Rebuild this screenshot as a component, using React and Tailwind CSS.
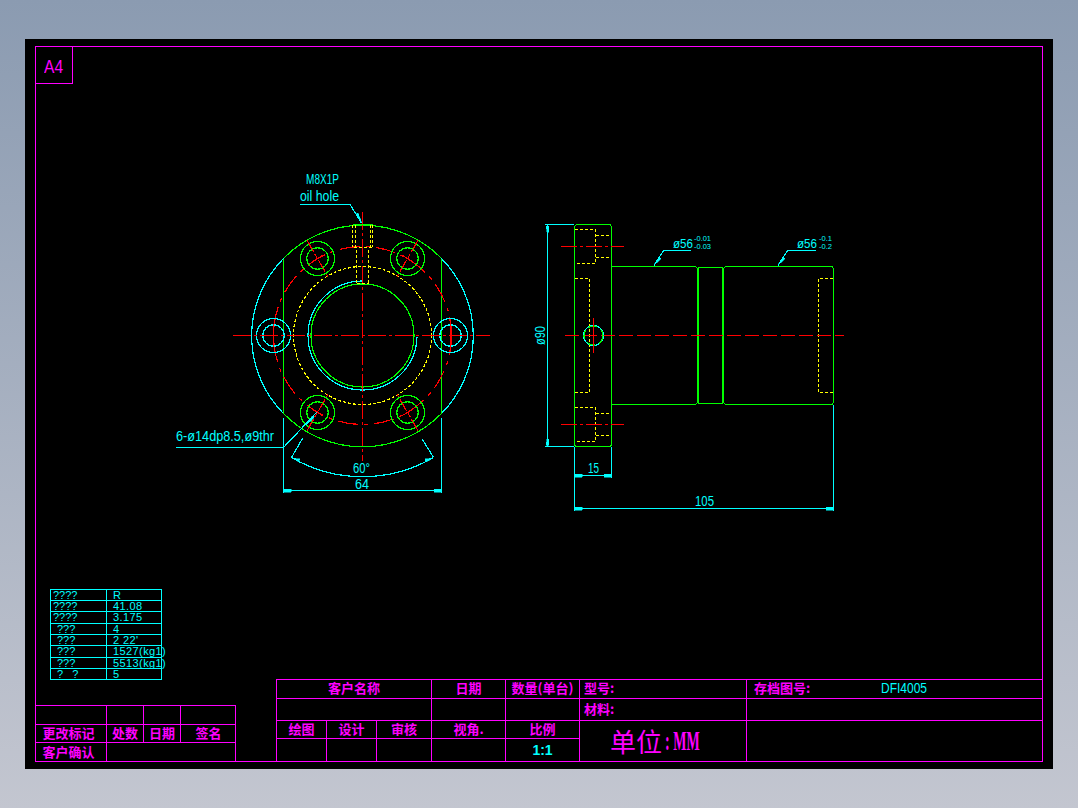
const GREEN = "#00ff00", CYAN = "#00ffff", RED = "#ff0000", YEL = "#ffff00";

function L({ d, c, dash }) {
  return <path d={d} fill="none" stroke={c} strokeWidth="1.2" strokeDasharray={dash} />;
}
function C({ x, y, r, c, dash }) {
  return <circle cx={x} cy={y} r={r} fill="none" stroke={c} strokeWidth="1.2" strokeDasharray={dash} />;
}
function T({ x, y, w, s = 13, rot, children }) {
  return (
    <text x={x} y={y} fill={CYAN} fontSize={s} textLength={w} lengthAdjust="spacingAndGlyphs"
      transform={rot ? `rotate(${rot} ${x} ${y})` : undefined}>
      {children}
    </text>
  );
}
function Arrow({ p }) {
  return <polygon points={p} fill={CYAN} stroke={CYAN} strokeWidth="0.5" />;
}

const cx = 362.5, cy = 335.5;
const centerDash = "18 3 3 3";
const holes = [
  [317.5, 258.5, 120],
  [407.5, 258.5, 60],
  [317.5, 412.5, 240],
  [407.5, 412.5, 300],
];

function Hole({ x, y, a }) {
  const t = (a * Math.PI) / 180;
  const ux = Math.cos(t), uy = -Math.sin(t);
  const px = -uy, py = ux;
  return (
    <g>
      <C x={x} y={y} r={17} c={GREEN} />
      <C x={x} y={y} r={10.7} c={GREEN} />
      <L c={RED} dash="13 3 4 3" d={`M${x + ux * 21} ${y + uy * 21}L${x - ux * 21} ${y - uy * 21}`} />
      <L c={RED} d={`M${x + px * 6} ${y + py * 6}L${x - px * 6} ${y - py * 6}`} />
    </g>
  );
}

function Drawing() {
  return (
    <svg width="1006" height="505" viewBox="36 84 1006 505" shapeRendering="crispEdges"
      className="block font-['Liberation_Sans',sans-serif]">
      {/* front view */}
      <L c={GREEN} d="M283.5 258.5A110.3 110.3 0 0 1 441.5 258.5" />
      <L c={CYAN} d="M441.5 258.5A110.3 110.3 0 0 1 441.5 413.5" />
      <L c={GREEN} d="M441.5 413.5A110.3 110.3 0 0 1 283.5 413.5" />
      <L c={CYAN} d="M283.5 413.5A110.3 110.3 0 0 1 283.5 258.5" />
      <L c={GREEN} d="M283.5 258.5V413.5M441.5 258.5V413.5" />
      <C x={cx} y={cy} r={89} c={RED} dash="20 6 4 6" />
      <C x={cx} y={cy} r={69} c={YEL} dash="3 2" />
      <L c={CYAN} d="M362.5 281A54.5 54.5 0 1 0 417 337" />
      <C x={cx} y={cy} r={51.5} c={GREEN} />
      {holes.map(([x, y, a]) => <Hole key={a} x={x} y={y} a={a} />)}
      {[273.5, 450.5].map((x) => (
        <g key={x}>
          <C x={x} y={cy} r={17} c={CYAN} />
          <C x={x} y={cy} r={10.7} c={CYAN} />
          <L c={RED} d={`M${x} 324V347`} />
        </g>
      ))}
      <L c={RED} dash={centerDash} d="M233 335.5H490" />
      <L c={RED} dash={centerDash} d="M362.5 212V461" />
      {/* oil hole */}
      <L c={GREEN} d="M352.5 224.5H372.5" />
      <L c={YEL} dash="3 2" d="M352.5 224.5V247M355.5 224.5V247M370.5 224.5V247M372.5 224.5V247M353.5 247.5H372M356.5 249.5V284M368.5 249.5V284M356.5 283.5H369" />
      <L c={CYAN} d="M300 204.5H350L361.5 223" />
      <Arrow p="356,214 358,213 362,223" />
      <T x={306} y={184} w={33} s={14}>M8X1P</T>
      <T x={300} y={201} w={39} s={14}>oil hole</T>
      {/* thread note */}
      <L c={CYAN} d="M176 447.5H283.5L317 412" />
      <Arrow p="312,416 314,418 306,425" />
      <T x={176} y={441} w={98} s={15}>6-ø14dp8.5,ø9thr</T>
      {/* 60 / 64 */}
      <L c={CYAN} d="M291.5 457.5A141 141 0 0 0 433.5 457.5" />
      <L c={CYAN} d="M302.5 438.5L291.5 457.5M422.5 439.5L433.5 457.5" />
      <Arrow p="292,458 300,459 299,462" />
      <Arrow p="433,458 425,459 426,462" />
      <T x={353} y={473} w={17} s={14}>60°</T>
      <L c={CYAN} d="M283.5 418V492.5M441.5 418V492.5M283.5 490.5H441.5" />
      <Arrow p="284,489 291,489 291,492 284,492" />
      <Arrow p="441,489 434,489 434,492 441,492" />
      <T x={355} y={489} w={14} s={14}>64</T>

      {/* side view */}
      <L c={GREEN} d="M576.5 224.5H610L611.5 226.5V445L610 446.5H576.5L574.5 445V226.5Z" />
      <L c={GREEN} d="M611.5 266.5H695.5L697.5 268.5V402.5L695.5 404.5H611.5" />
      <L c={GREEN} d="M698.5 267.5H722.5V403.5H698.5Z" />
      <L c={GREEN} d="M725.5 266.5H832L833.5 268.5V402.5L832 404.5H725.5L723.5 402.5V268.5Z" />
      <L c={YEL} dash="3 2" d="M575 229.5H595.5V263.5H575M596 235.5H611M596 257.5H611" />
      <L c={YEL} dash="3 2" d="M575 407.5H595.5V441.5H575M596 413.5H611M596 435.5H611" />
      <L c={YEL} dash="3 2" d="M575 278.5H589.5V392.5H575" />
      <L c={YEL} dash="3 2" d="M833 278.5H818.5V392.5H833" />
      <L c={RED} dash="16 3 3 3" d="M561 246.5H623.5M561 424.5H623.5" />
      <L c={RED} dash="14 4" d="M565 335.5H844" />
      <C x={593.5} y={335.5} r={10} c={CYAN} />
      <C x={593.5} y={335.5} r={9.5} c={GREEN} dash="9 4" />
      <L c={RED} d="M593.5 318V353" />
      {/* dims */}
      <L c={CYAN} d="M545 224.5H574M545 446.5H574M547.5 225V446" />
      <Arrow p="546,226 549,226 548.5,232 547,232" />
      <Arrow p="546,445 549,445 548.5,439 547,439" />
      <T x={545} y={345} w={19} s={14} rot={-90}>ø90</T>
      <L c={CYAN} d="M574.5 447V510.5M611.5 447V478M575 475.5H611" />
      <Arrow p="575,474 582,474 582,477 575,477" />
      <Arrow p="611,474 604,474 604,477 611,477" />
      <T x={588} y={473} w={11} s={15}>15</T>
      <L c={CYAN} d="M833.5 405V510.5M575 508.5H833" />
      <Arrow p="575,507 582,507 582,510 575,510" />
      <Arrow p="833,507 826,507 826,510 833,510" />
      <T x={695} y={506} w={19} s={15}>105</T>
      <L c={CYAN} d="M691 250.5H663.5L654 265.5" />
      <Arrow p="654,265 659,257 661,259" />
      <T x={673} y={248} w={20} s={13}>ø56</T>
      <T x={694} y={241} w={17} s={7}>-0.01</T>
      <T x={694} y={249} w={17} s={7}>-0.03</T>
      <L c={CYAN} d="M816 250.5H787.5L778 265.5" />
      <Arrow p="778,265 783,257 785,259" />
      <T x={797} y={248} w={20} s={13}>ø56</T>
      <T x={819} y={241} w={13} s={7}>-0.1</T>
      <T x={819} y={249} w={13} s={7}>-0.2</T>
    </svg>
  );
}

const params = [
  ["????", "R", "h-[11px]", "pl-[2px]"],
  ["????", "41.08", "h-[11px]", "pl-[2px]"],
  ["????", "3.175", "h-[12px]", "pl-[2px]"],
  ["???", "4", "h-[11px]", "pl-[6px]"],
  ["???", "2 22'", "h-[11px]", "pl-[6px]"],
  ["???", "1527(kg1)", "h-[12px]", "pl-[6px]"],
  ["???", "5513(kg1)", "h-[11px]", "pl-[6px]"],
  ["?   ?", "5", "h-[11px]", "pl-[6px]"],
];

function ParamTable() {
  return (
    <div className="ml-[14px] w-[112px] border border-b-0 border-[#00ffff] font-['Liberation_Sans',sans-serif] text-[11px] leading-none text-[#00ffff]">
      {params.map(([a, b, h, p], i) => (
        <div key={i} className={`flex border-b border-[#00ffff] ${h}`}>
          <div className={`w-[56px] shrink-0 border-r border-[#00ffff] whitespace-pre ${p}`}>{a}</div>
          <div className="pl-[6px] whitespace-nowrap tracking-[0.4px]">{b}</div>
        </div>
      ))}
    </div>
  );
}

const cell = "flex items-center justify-center border-[#ff00ff] font-bold text-[13px] leading-none";
const label = `${cell} pb-[3px]`;

function ChangeTable() {
  return (
    <div className="mt-[25px] grid w-[200px] grid-cols-[71px_37px_37px_55px] grid-rows-[19px_18px_19px] border-t border-r border-[#ff00ff] text-[#ff00ff]">
      <div className={`${cell} border-r border-b`} />
      <div className={`${cell} border-r border-b`} />
      <div className={`${cell} border-r border-b`} />
      <div className={`${cell} border-b`} />
      <div className={`${label} border-r border-b pr-[5px]`}>更改标记</div>
      <div className={`${label} border-r border-b`}>处数</div>
      <div className={`${label} border-r border-b`}>日期</div>
      <div className={`${label} border-b`}>签名</div>
      <div className={`${label} border-r pr-[5px]`}>客户确认</div>
      <div className={`${cell} col-span-3`} />
    </div>
  );
}

function TitleBlock() {
  return (
    <div className="grid w-[766px] grid-cols-[50px_50px_55px_74px_74px_167px_295px] grid-rows-[19px_22px_18px_22px] border-t border-l border-[#ff00ff] text-[#ff00ff]">
      <div className={`${label} col-span-3 border-r border-b`}>客户名称</div>
      <div className={`${label} border-r border-b`}>日期</div>
      <div className={`${label} border-r border-b`}>数量(单台)</div>
      <div className={`${label} border-r border-b !justify-start pl-[4px]`}>型号:</div>
      <div className={`${label} border-b !justify-start pl-[7px]`}>
        存档图号:
        <span className="ml-[71px] inline-block origin-left scale-x-[0.8] font-normal font-['Liberation_Sans',sans-serif] text-[#00ffff] text-[15px]">DFI4005</span>
      </div>

      <div className={`${cell} col-span-3 border-r border-b`} />
      <div className={`${cell} border-r border-b`} />
      <div className={`${cell} border-r border-b`} />
      <div className={`${label} border-r border-b !justify-start pl-[4px]`}>材料:</div>
      <div className={`${cell} border-b`} />

      <div className={`${label} border-r border-b`}>绘图</div>
      <div className={`${label} border-r border-b`}>设计</div>
      <div className={`${label} border-r border-b`}>审核</div>
      <div className={`${label} border-r border-b`}>视角.</div>
      <div className={`${label} border-r border-b`}>比例</div>
      <div className={`${cell} row-span-2 border-r !justify-start pl-[30px] !font-normal`}>
        <span className="text-[26px]">单位</span>
        <span className="ml-[3px] inline-block origin-left scale-x-[0.5] whitespace-pre font-['Liberation_Serif',serif] text-[28px] font-bold">: MM</span>
      </div>
      <div className={`${cell} row-span-2`} />

      <div className={`${cell} border-r`} />
      <div className={`${cell} border-r`} />
      <div className={`${cell} border-r`} />
      <div className={`${cell} border-r`} />
      <div className={`${cell} border-r text-[#00ffff] font-['Liberation_Sans',sans-serif] text-[14px]`}>1:1</div>
    </div>
  );
}

export default function App() {
  return (
    <div className="h-[808px] w-[1078px] overflow-hidden bg-gradient-to-b from-[#8b9bb1] to-[#c3c6d0] pt-[39px] pl-[25px] font-['Noto_Sans_CJK_SC',sans-serif]">
      <div className="h-[730px] w-[1028px] bg-black pt-[7px] pl-[10px]">
        <div className="h-[716px] w-[1008px] border border-[#ff00ff]">
          <div className="flex h-[37px] w-[37px] items-center justify-center border-r border-b border-[#ff00ff] pt-[2px] font-['Liberation_Sans',sans-serif] text-[#ff00ff]">
            <span className="inline-block scale-x-[0.82] text-[19px] leading-none">A4</span>
          </div>
          <Drawing />
          <div className="flex h-[172px] items-end justify-between">
            <div className="flex h-full w-[240px] flex-col">
              <ParamTable />
              <ChangeTable />
            </div>
            <TitleBlock />
          </div>
        </div>
      </div>
    </div>
  );
}
